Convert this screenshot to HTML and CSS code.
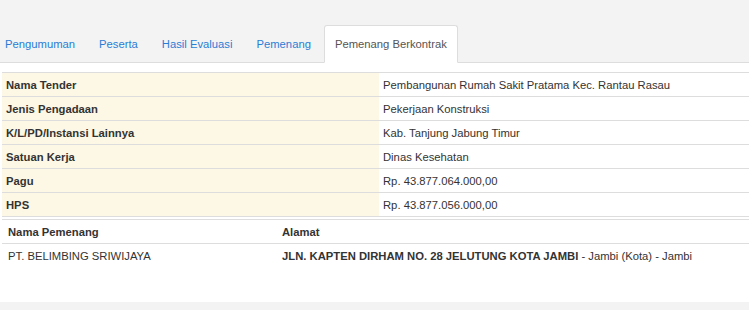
FILE: index.html
```html
<!DOCTYPE html>
<html lang="id">
<head>
    <meta charset="UTF-8">
    <meta name="viewport" content="width=device-width, initial-scale=1.0">
    <title>Pemenang Berkontrak</title>
    <link rel="stylesheet" href="styles.css">
</head>
<body>
    <ul class="tabs">
        <li class="tab"><a href="#">Pengumuman</a></li>
        <li class="tab"><a href="#">Peserta</a></li>
        <li class="tab"><a href="#">Hasil Evaluasi</a></li>
        <li class="tab"><a href="#">Pemenang</a></li>
        <li class="tab active"><a href="#">Pemenang Berkontrak</a></li>
    </ul>

    <div class="panel">
        <table class="info-table">
            <tr><th>Nama Tender</th><td>Pembangunan Rumah Sakit Pratama Kec. Rantau Rasau</td></tr>
            <tr><th>Jenis Pengadaan</th><td>Pekerjaan Konstruksi</td></tr>
            <tr><th>K/L/PD/Instansi Lainnya</th><td>Kab. Tanjung Jabung Timur</td></tr>
            <tr><th>Satuan Kerja</th><td>Dinas Kesehatan</td></tr>
            <tr><th>Pagu</th><td>Rp. 43.877.064.000,00</td></tr>
            <tr><th>HPS</th><td>Rp. 43.877.056.000,00</td></tr>
        </table>

        <table class="winner-table">
            <tr><th class="col-name">Nama Pemenang</th><th>Alamat</th></tr>
            <tr>
                <td>PT. BELIMBING SRIWIJAYA</td>
                <td><b>JLN. KAPTEN DIRHAM NO. 28 JELUTUNG KOTA JAMBI</b> - Jambi (Kota) - Jambi</td>
            </tr>
        </table>
    </div>
</body>
</html>
```

FILE: styles.css
```css
body {
    margin: 0;
    background-color: #f3f3f4;
    color: #333;
    font-family: "Liberation Sans", Arial, sans-serif;
    font-size: 11.25px;
    padding-top: 25px;
}

.tabs {
    list-style: none;
    margin: 0 0 0 -6px;
    padding: 0;
    display: flex;
    border-bottom: 1px solid #ddd;
}

.tab {
    margin-right: 2px;
    margin-bottom: -1px;
}

.tab a {
    display: flex;
    align-items: center;
    height: 36px;
    padding: 0 10px;
    border: 1px solid transparent;
    border-radius: 3px 3px 0 0;
    color: #2a7dd5;
    text-decoration: none;
}

.tab.active a {
    background-color: #fff;
    color: #555;
    border-color: #ddd;
    border-bottom-color: #fff;
}

.panel {
    background-color: #fff;
    height: 230px;
    padding: 9px 0 0 2px;
}

table {
    width: 100%;
    border-collapse: collapse;
}

.info-table th,
.info-table td {
    height: 23px;
    padding: 0 4px;
    border-top: 1px solid #ddd;
    border-bottom: 1px solid #ddd;
    text-align: left;
    vertical-align: middle;
}

.info-table th {
    width: 369px;
    background-color: #fcf8e5;
    font-weight: bold;
}

.winner-table {
    margin-top: 2px;
}

.winner-table th,
.winner-table td {
    height: 23px;
    padding: 0 6px;
    text-align: left;
    vertical-align: middle;
}

.winner-table th {
    border-top: 1px solid #ddd;
    border-bottom: 1px solid #ddd;
    font-weight: bold;
}

.winner-table .col-name {
    width: 262px;
}
```
